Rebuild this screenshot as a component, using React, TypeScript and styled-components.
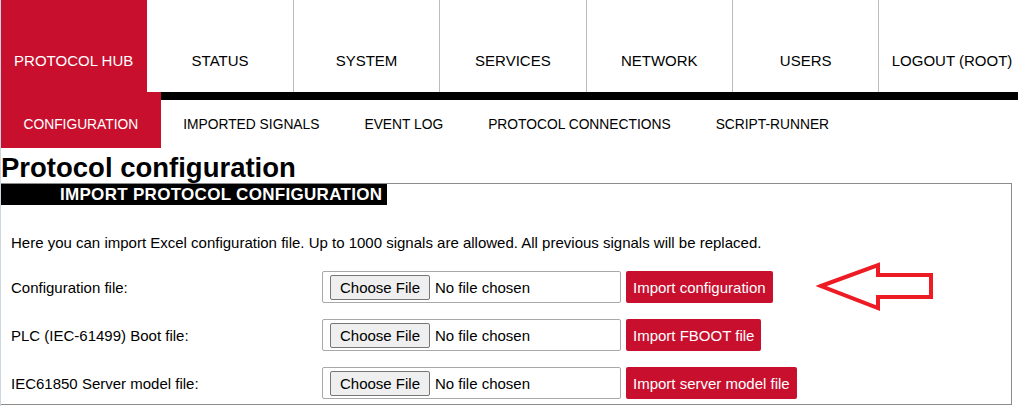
import React from "react";
import styled, { createGlobalStyle } from "styled-components";

const RED = "#c8102e";

const Global = createGlobalStyle`
  html, body {
    margin: 0;
    padding: 0;
    background: #fff;
    overflow: hidden;
  }
  body {
    font-family: "Liberation Sans", Arial, sans-serif;
    color: #000;
  }
  * { box-sizing: border-box; }
`;

const Page = styled.div`
  border-left: 1px solid #cdd5e0;
  min-height: 406px;
`;

const TopNav = styled.nav`
  display: grid;
  grid-template-columns: repeat(7, 146.4px);
  height: 92px;
`;

const NavCell = styled.a<{ $active?: boolean }>`
  display: flex;
  align-items: center;
  justify-content: center;
  padding-top: 29px;
  border-right: 1px solid ${(p) => (p.$active ? RED : "#bcbcbc")};
  background: ${(p) => (p.$active ? RED : "#fff")};
  color: ${(p) => (p.$active ? "#fff" : "#000")};
  font-size: 15px;
  text-decoration: none;
  white-space: nowrap;
`;

const SubNav = styled.nav`
  display: flex;
  height: 56px;
  box-shadow: inset 0 8px 0 #000;
`;

const SubItem = styled.a<{ $active?: boolean }>`
  display: flex;
  align-items: center;
  padding: 8px 22.5px 0;
  font-size: 13.8px;
  text-decoration: none;
  white-space: nowrap;
  background: ${(p) => (p.$active ? RED : "transparent")};
  color: ${(p) => (p.$active ? "#fff" : "#000")};
`;

const Heading = styled.h1`
  margin: 0;
  padding-top: 4px;
  font-size: 27.5px;
  line-height: 31px;
  font-weight: bold;
`;

const Panel = styled.section`
  width: 1011px;
  border: 1px solid #8c8c8c;
  border-left: none;
  padding-bottom: 5px;
`;

const PanelTitle = styled.div`
  display: inline-block;
  height: 21px;
  line-height: 21px;
  padding: 0 5px 0 59px;
  background: #000;
  color: #fff;
  font-weight: bold;
  font-size: 17px;
  letter-spacing: 0.3px;
`;

const Description = styled.p`
  margin: 29px 0 0 10px;
  font-size: 15px;
  line-height: 17px;
`;

const Form = styled.div`
  display: grid;
  grid-template-columns: 311px auto;
  row-gap: 16px;
  align-items: center;
  margin-top: 20px;
  padding-left: 10px;
`;

const FieldLabel = styled.span`
  font-size: 15px;
  line-height: 17px;
`;

const Controls = styled.div`
  display: flex;
  align-items: center;
  gap: 5px;
  height: 32px;
`;

const FileBox = styled.label`
  display: flex;
  align-items: center;
  gap: 5px;
  width: 299px;
  height: 32px;
  padding-left: 7px;
  border: 1px solid #a8a8a8;
  border-radius: 2px;
  font-size: 15px;
  cursor: pointer;

  input {
    display: none;
  }
`;

const ChooseButton = styled.span`
  display: flex;
  align-items: center;
  justify-content: center;
  width: 100px;
  height: 25px;
  background: #efefef;
  border: 1px solid #767676;
  border-radius: 2px;
  font-size: 15px;
`;

const ImportButton = styled.button`
  height: 32px;
  padding: 0 7px;
  border: none;
  border-radius: 2px;
  background: ${RED};
  color: #fff;
  font-family: "Liberation Sans", Arial, sans-serif;
  font-size: 15px;
  cursor: pointer;
`;

const Arrow = styled.svg`
  flex: none;
  margin: -10px 0 -10px 38px;
`;

const navItems = ["PROTOCOL HUB", "STATUS", "SYSTEM", "SERVICES", "NETWORK", "USERS", "LOGOUT (ROOT)"];
const subItems = ["CONFIGURATION", "IMPORTED SIGNALS", "EVENT LOG", "PROTOCOL CONNECTIONS", "SCRIPT-RUNNER"];

const rows = [
  { label: "Configuration file:", button: "Import configuration", arrow: true },
  { label: "PLC (IEC-61499) Boot file:", button: "Import FBOOT file" },
  { label: "IEC61850 Server model file:", button: "Import server model file" },
];

export default function App() {
  return (
    <Page>
      <Global />
      <TopNav>
        {navItems.map((n, i) => (
          <NavCell key={n} $active={i === 0}>
            {n}
          </NavCell>
        ))}
      </TopNav>
      <SubNav>
        {subItems.map((s, i) => (
          <SubItem key={s} $active={i === 0}>
            {s}
          </SubItem>
        ))}
      </SubNav>
      <Heading>Protocol configuration</Heading>
      <Panel>
        <PanelTitle>IMPORT PROTOCOL CONFIGURATION</PanelTitle>
        <Description>
          Here you can import Excel configuration file. Up to 1000 signals are allowed. All previous signals will be
          replaced.
        </Description>
        <Form>
          {rows.map((r) => (
            <React.Fragment key={r.label}>
              <FieldLabel>{r.label}</FieldLabel>
              <Controls>
                <FileBox>
                  <input type="file" />
                  <ChooseButton>Choose File</ChooseButton>
                  <span>No file chosen</span>
                </FileBox>
                <ImportButton type="button">{r.button}</ImportButton>
                {r.arrow && (
                  <Arrow width="120" height="52" viewBox="815 261 120 52">
                    <polygon
                      points="820,286 877,265 877,275 930,275 930,297 877,297 877,308"
                      fill="none"
                      stroke="#ed1c24"
                      strokeWidth="4"
                    />
                  </Arrow>
                )}
              </Controls>
            </React.Fragment>
          ))}
        </Form>
      </Panel>
    </Page>
  );
}
